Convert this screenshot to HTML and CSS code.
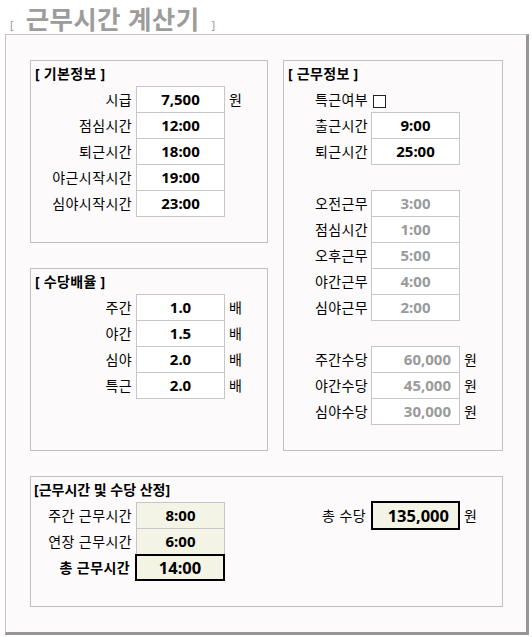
FILE: index.html
```html
<!DOCTYPE html>
<html lang="ko">

<head>
    <meta charset="UTF-8">
    <meta name="viewport" content="width=device-width, initial-scale=1">
    <title>근무시간 계산기</title>
    <link rel="stylesheet" href="styles.css">
</head>

<body>
    <div class="title">
        <span class="br">[</span><span class="title-text">근무시간 계산기</span><span class="br">]</span>
    </div>

    <div class="frame">
        <div class="top">
            <div class="col-left">
                <section class="box">
                    <div class="box-head">[ 기본정보 ]</div>
                    <div class="row"><span class="label">시급</span><span class="cell">7,500</span><span class="unit">원</span></div>
                    <div class="row"><span class="label">점심시간</span><span class="cell">12:00</span></div>
                    <div class="row"><span class="label">퇴근시간</span><span class="cell">18:00</span></div>
                    <div class="row"><span class="label">야근시작시간</span><span class="cell">19:00</span></div>
                    <div class="row"><span class="label">심야시작시간</span><span class="cell">23:00</span></div>
                </section>

                <section class="box">
                    <div class="box-head">[ 수당배율 ]</div>
                    <div class="row"><span class="label">주간</span><span class="cell">1.0</span><span class="unit">배</span></div>
                    <div class="row"><span class="label">야간</span><span class="cell">1.5</span><span class="unit">배</span></div>
                    <div class="row"><span class="label">심야</span><span class="cell">2.0</span><span class="unit">배</span></div>
                    <div class="row"><span class="label">특근</span><span class="cell">2.0</span><span class="unit">배</span></div>
                </section>
            </div>

            <section class="box box-work">
                <div class="box-head">[ 근무정보 ]</div>
                <div class="row"><span class="label">특근여부</span><span class="check"></span></div>
                <div class="row"><span class="label">출근시간</span><span class="cell">9:00</span></div>
                <div class="row"><span class="label">퇴근시간</span><span class="cell">25:00</span></div>
                <div class="row"></div>
                <div class="row"><span class="label">오전근무</span><span class="cell calc">3:00</span></div>
                <div class="row"><span class="label">점심시간</span><span class="cell calc">1:00</span></div>
                <div class="row"><span class="label">오후근무</span><span class="cell calc">5:00</span></div>
                <div class="row"><span class="label">야간근무</span><span class="cell calc">4:00</span></div>
                <div class="row"><span class="label">심야근무</span><span class="cell calc">2:00</span></div>
                <div class="row"></div>
                <div class="row"><span class="label">주간수당</span><span class="cell calc money">60,000</span><span class="unit">원</span></div>
                <div class="row"><span class="label">야간수당</span><span class="cell calc money">45,000</span><span class="unit">원</span></div>
                <div class="row"><span class="label">심야수당</span><span class="cell calc money">30,000</span><span class="unit">원</span></div>
            </section>
        </div>

        <section class="box box-total">
            <div class="box-head tight">[근무시간 및 수당 산정]</div>
            <div class="row">
                <span class="label">주간 근무시간</span><span class="cell result">8:00</span>
                <span class="spacer"></span>
                <span class="label label-sum">총 수당</span><span class="cell result strong money">135,000</span><span class="unit">원</span>
            </div>
            <div class="row"><span class="label">연장 근무시간</span><span class="cell result">6:00</span></div>
            <div class="row"><span class="label label-bold">총 근무시간</span><span class="cell result strong">14:00</span></div>
        </section>
    </div>
</body>

</html>
```

FILE: styles.css
```css
/* Page */
body {
    margin: 0;
    background: #fff;
    color: #000;
    font: 14px "Noto Sans", "Noto Sans CJK KR", sans-serif;
}

/* Title */
.title {
    height: 33px;
    padding: 1px 0 0 10px;
    line-height: 33px;
    color: #9c9c9c;
    white-space: nowrap;
}

.title .br {
    font-size: 11px;
}

.title-text {
    margin: 0 12px 0 12px;
    font-family: "Noto Sans CJK KR", sans-serif;
    font-size: 25.5px;
    font-weight: bold;
    letter-spacing: .3px;
}

/* Outer frame */
.frame {
    box-sizing: border-box;
    width: 524px;
    height: 601px;
    margin-left: 5px;
    padding: 25px 0 0 24px;
    background: #fcfafa;
    border: 1px solid #c4c4c4;
    border-right: 3px solid #969696;
    border-bottom: 3px solid #969696;
}

.top {
    display: flex;
    gap: 15px;
}

.col-left {
    display: flex;
    flex-direction: column;
    gap: 25px;
    width: 238px;
}

/* Boxes */
.box {
    box-sizing: border-box;
    height: 183px;
    border: 1px solid #c0c0c0;
}

.box-work {
    width: 220px;
    height: 391px;
}

.box-total {
    width: 473px;
    height: 131px;
    margin-top: 25px;
}

.box-head {
    height: 26px;
    padding-left: 4px;
    line-height: 26px;
    font-weight: bold;
    letter-spacing: .3px;
}

.box-head.tight {
    padding-left: 3px;
    letter-spacing: 0;
}

/* Rows */
.row {
    display: flex;
    height: 26px;
    line-height: 26px;
    white-space: nowrap;
}

.label {
    box-sizing: border-box;
    width: 105px;
    padding-right: 4px;
    text-align: right;
    letter-spacing: .4px;
}

.box-work .label {
    width: 87px;
    padding-right: 3px;
}

.unit {
    padding-left: 4px;
}

.cell {
    box-sizing: border-box;
    flex: none;
    width: 89px;
    height: 27px;
    margin-top: -1px;
    background: #fff;
    border: 1px solid #c6c6c6;
    line-height: 25px;
    text-align: center;
    font-size: 15px;
    font-weight: bold;
}

.calc {
    color: #9a9a9a;
}

.money {
    padding-right: 8px;
    text-align: right;
}

.check {
    box-sizing: border-box;
    align-self: center;
    width: 13px;
    height: 13px;
    margin: 2px 0 0 2px;
    background: #fff;
    border: 1px solid #222;
}

/* Totals */
.result {
    background: #f4f4e6;
}

.strong {
    width: 90px;
    margin-left: -1px;
    border: 2px solid #000;
    line-height: 23px;
    font-size: 16.5px;
}

.strong.money {
    width: 89px;
    height: 29px;
    margin: -2px 0 0 0;
    padding-right: 9px;
    line-height: 25px;
}

.spacer {
    width: 59px;
}

.label-sum {
    width: 87px;
    padding-right: 5px;
}

.label-bold {
    padding-right: 6px;
    font-weight: bold;
}
```
